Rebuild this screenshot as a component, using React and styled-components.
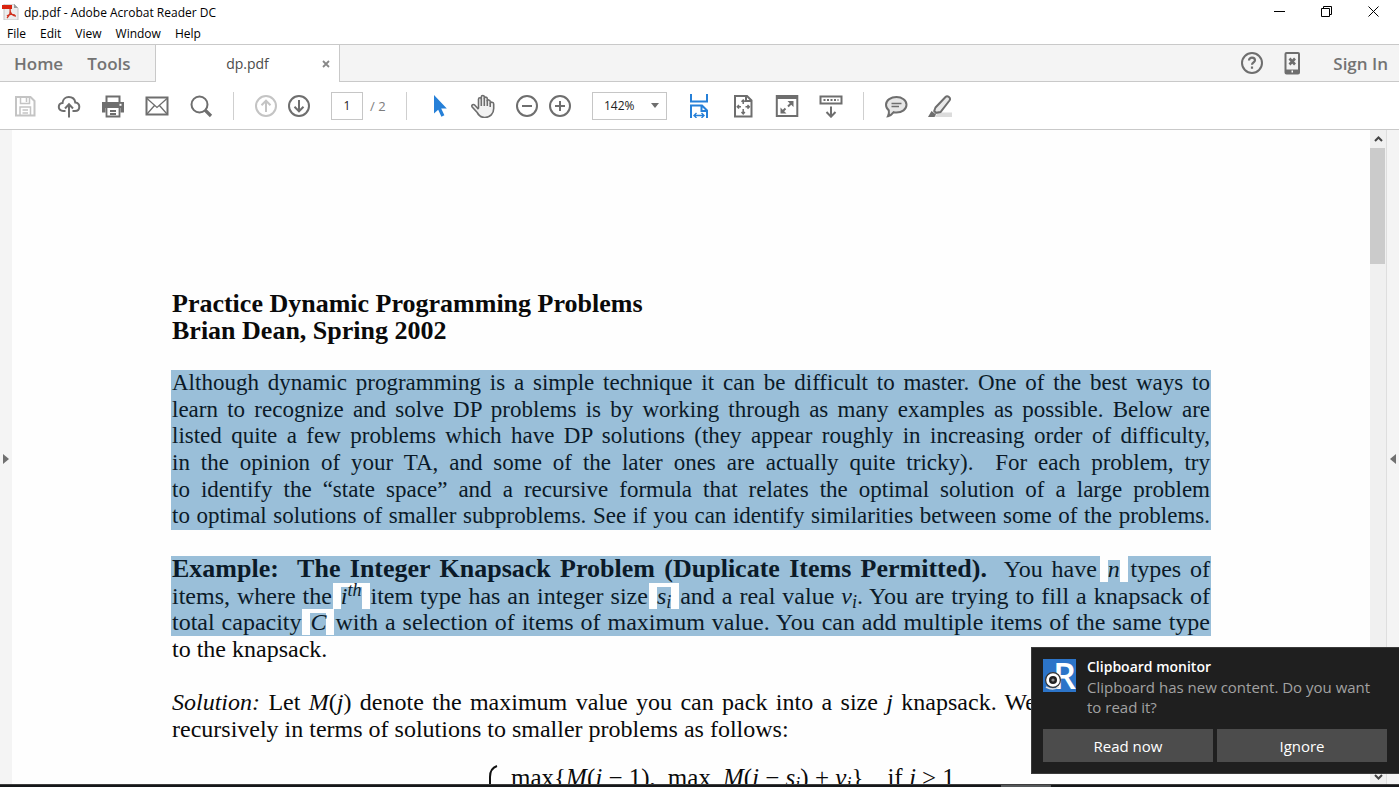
import React from 'react';
import styled, { createGlobalStyle } from 'styled-components';

const GlobalStyle = createGlobalStyle`
  * {
    box-sizing: border-box;
  }
  body {
    margin: 0;
    font-family: 'Open Sans', 'Noto Sans', sans-serif;
    color: #000;
    overflow: hidden;
  }
  button, input, select {
    font-family: inherit;
  }
`;

const Window = styled.div`
  display: flex;
  flex-direction: column;
  height: 100vh;
  background: #fff;
`;

const TitleBar = styled.header`
  display: flex;
  align-items: center;
  height: 24px;
  padding: 0 2px;
  gap: 5px;
`;

const Title = styled.h1`
  flex: 1;
  margin: 0;
  font-size: 12px;
  font-weight: 400;
`;

const WindowButton = styled.button`
  display: flex;
  align-items: center;
  justify-content: center;
  width: 47px;
  height: 22px;
  padding: 0;
  border: 0;
  background: none;
`;

const WindowButtons = styled.div`
  display: flex;
  align-self: flex-start;
`;

const MenuBar = styled.nav`
  display: flex;
  height: 20px;
  padding: 0 7px;
  gap: 14px;
`;

const MenuItem = styled.button`
  padding: 0;
  border: 0;
  background: none;
  font-size: 12px;
  line-height: 20px;
  color: #000;
`;

const TabBar = styled.div`
  display: flex;
  height: 38px;
  background: #f4f4f4;
  border-top: 1px solid #c9c9c9;
  border-bottom: 1px solid #c9c9c9;
`;

const MainTabs = styled.div`
  display: flex;
  align-items: center;
  width: 155px;
  padding-left: 14px;
  gap: 24px;
`;

const TabLink = styled.button`
  padding: 0;
  border: 0;
  background: none;
  font-size: 17px;
  font-weight: 600;
  color: #737373;
`;

const FileTab = styled.div`
  display: flex;
  align-items: center;
  width: 185px;
  height: 37px;
  padding: 0 8px 0 18px;
  background: #fff;
  border-left: 1px solid #c9c9c9;
  border-right: 1px solid #c9c9c9;
`;

const FileName = styled.span`
  flex: 1;
  text-align: center;
  font-size: 14px;
  color: #4b4b4b;
`;

const IconButton = styled.button`
  display: flex;
  align-items: center;
  justify-content: center;
  width: ${({ $small }) => ($small ? '10px' : '26px')};
  height: ${({ $small }) => ($small ? '10px' : '26px')};
  padding: 0;
  border: 0;
  background: none;
  color: ${({ $tone }) => $tone || '#6e6e6e'};
  svg {
    flex: none;
  }
`;

const Account = styled.div`
  display: flex;
  align-items: center;
  margin-left: auto;
  padding-right: 11px;
  gap: 14px;
`;

const SignIn = styled(TabLink)`
  margin-left: 14px;
`;

const ToolBar = styled.div`
  display: flex;
  align-items: center;
  height: 48px;
  padding: 0 12px;
  gap: 19px;
  border-bottom: 1px solid #c9c9c9;
`;

const ToolGroup = styled.div`
  display: flex;
  align-items: center;
  gap: ${({ $tight }) => ($tight ? '7px' : '18px')};
`;

const Divider = styled.span`
  width: 1px;
  height: 28px;
  background: #cfcfcf;
`;

const PageInput = styled.input`
  width: 32px;
  height: 28px;
  padding: 0;
  border: 1px solid #c6c6c6;
  text-align: center;
  font-size: 12px;
  color: #222;
`;

const PageTotal = styled.span`
  width: 17px;
  font-size: 13px;
  color: #7d7d7d;
  white-space: nowrap;
`;

const SelectBox = styled.div`
  display: grid;
  align-items: center;
  width: 75px;
  > * {
    grid-area: 1 / 1;
  }
  svg {
    justify-self: end;
    margin-right: 8px;
    pointer-events: none;
  }
`;

const ZoomSelect = styled.select`
  appearance: none;
  height: 28px;
  padding: 0 11px;
  border: 1px solid #c6c6c6;
  border-radius: 0;
  background: #fff;
  font-size: 12px;
  color: #222;
`;

const Workspace = styled.div`
  display: flex;
  flex: 1;
  min-height: 0;
`;

const SidePane = styled.button`
  display: flex;
  align-items: center;
  justify-content: center;
  width: 12px;
  padding: 4px 0 0;
  border: 0;
  background: #f4f4f4;
`;

const RightPane = styled(SidePane)`
  width: 13px;
  border-left: 1px solid #dedede;
`;

const Page = styled.main`
  flex: 1;
  min-width: 0;
  overflow: hidden;
  background: #fefefe;
`;

const Sheet = styled.article`
  display: flex;
  flex-direction: column;
  gap: 26px;
  max-width: 1040px;
  margin: 0 auto;
  padding-top: 160px;
  font-family: 'Liberation Serif', serif;
  font-size: 24px;
  line-height: 26px;
  color: #0a0a0a;
  b {
    font-size: 26px;
  }
`;

const DocTitle = styled.h2`
  margin: 0;
  padding-left: 1px;
  font-size: 26px;
  line-height: 27px;
`;

const Passage = styled.div`
  display: flex;
  flex-direction: column;
`;

const Lines = styled.p`
  display: grid;
  min-height: ${({ $height }) => $height}px;
  margin: 0;
  padding: 0 1px;
  background: ${({ $selected }) => ($selected ? '#9abfd9' : 'none')};
  color: ${({ $selected }) => ($selected ? '#0b1a28' : 'inherit')};
`;

const IntroLines = styled(Lines)`
  font-size: 23px;
`;

const Line = styled.span`
  display: block;
  white-space: nowrap;
  text-align: left;
  text-align-last: ${({ $loose }) => ($loose ? 'left' : 'justify')};
`;

const PartLine = styled(Line)`
  width: 864px;
`;

const Script = styled.span`
  font-size: 18px;
  font-style: italic;
  line-height: 1px;
  vertical-align: ${({ $up }) => ($up ? '8px' : '-4px')};
`;

const Unselected = styled.span`
  display: inline-block;
  height: 26px;
  padding: 0 8px;
  margin: 0 -6px;
  background: #fefefe;
  vertical-align: top;
`;

const Selected = styled.i`
  display: inline-block;
  height: 26px;
  background: #9abfd9;
  box-shadow: inset 0 4px #fefefe;
`;

const Formula = styled.div`
  display: flex;
  margin-top: -4px;
  padding-left: 316px;
  font-size: 25px;
  white-space: nowrap;
`;

const FormulaPart = styled.span`
  margin-left: ${({ $gap }) => $gap}px;
`;

const ScrollBar = styled.div`
  display: flex;
  flex-direction: column;
  width: 16px;
  background: #f0f0f0;
`;

const ScrollArrow = styled.button`
  display: flex;
  align-items: center;
  justify-content: center;
  height: ${({ $down }) => ($down ? '14px' : '18px')};
  margin-top: ${({ $down }) => ($down ? 'auto' : '0')};
  padding: 0;
  border: 0;
  background: none;
`;

const ScrollThumb = styled.div`
  height: 116px;
  margin-right: 1px;
  background: #cbcbcb;
`;

const TaskBar = styled.footer`
  display: flex;
  height: 3px;
  background: #151719;
  border-top: 1px solid #3d3d3d;
`;

const RunningApp = styled.span`
  width: 50px;
  margin-left: 1001px;
  background: #55585a;
`;

const Toast = styled.section`
  position: fixed;
  right: 0;
  bottom: 13px;
  width: 368px;
  padding: 9px 12px 11px 11px;
  background: #1f1f1f;
  border: 1px solid #3b3b3b;
  border-right: 0;
  color: #fff;
`;

const ToastBody = styled.div`
  display: flex;
  gap: 11px;
  svg {
    flex: none;
    margin-top: 2px;
  }
`;

const ToastTitle = styled.h3`
  margin: 0;
  font-size: 14px;
  font-weight: 600;
  line-height: 20px;
`;

const ToastText = styled.p`
  margin: 0;
  padding-right: 12px;
  font-size: 15px;
  line-height: 20px;
  color: #a2a2a2;
`;

const ToastActions = styled.div`
  display: grid;
  grid-template-columns: 1fr 1fr;
  gap: 4px;
  margin-top: 12px;
`;

const ToastButton = styled.button`
  height: 33px;
  padding: 0;
  border: 0;
  background: #4c4c4c;
  font-size: 15px;
  color: #fff;
`;

// 24px line icon
const Icon = ({ children, size = 24, width = 2 }) => (
  <svg width={size} height={size} viewBox="0 0 24 24" fill="none" stroke="currentColor" strokeWidth={width}>
    {children}
  </svg>
);

const PdfIcon = () => (
  <svg width="17" height="16" viewBox="0 0 17 16">
    <path d="M2 0h10l4 4v12H2z" fill="#ececec" stroke="#c4c4c4" />
    <path d="M12 0v4h4z" fill="#9a9a9a" />
    <path d="M0 1h10v4H0z" fill="#d9230f" />
    <path d="M8 5c1 4-1 7-3 9M8 7c1 3 3 5 6 5M5 12c2-2 5-2 8-1" stroke="#d0301c" strokeWidth="1.3" fill="none" />
  </svg>
);

const ReaderLogo = () => (
  <svg width="33" height="33" viewBox="0 0 33 33">
    <rect width="33" height="33" fill="#2c74c8" />
    <text x="10" y="30" fontFamily="Open Sans" fontSize="36" fontWeight="600" fill="#fff">R</text>
    <circle cx="10" cy="21" r="7.400" fill="#fff" stroke="#333" strokeWidth="1.2" />
    <circle cx="10" cy="21" r="4" fill="#222" />
    <circle cx="10" cy="21" r="1.600" fill="#8a8a8a" />
    <path d="M3 28q7 4 13 0" stroke="#ddd" strokeWidth="1.5" fill="none" />
  </svg>
);

const App = () => {
  return (
    <Window>
      <GlobalStyle />
      <TitleBar>
        <PdfIcon />
        <Title>dp.pdf - Adobe Acrobat Reader DC</Title>
        <WindowButtons>
          <WindowButton aria-label="Minimize">
            <svg width="11" height="11"><path d="M0 5.5h11" stroke="#000" /></svg>
          </WindowButton>
          <WindowButton aria-label="Restore">
            <svg width="11" height="11" fill="none" stroke="#000">
              <path d="M.5 2.5h8v8h-8zM2.500 2.500v-2h8v8h-2" />
            </svg>
          </WindowButton>
          <WindowButton aria-label="Close">
            <svg width="11" height="11"><path d="M.5.5l10 10M10.500.5l-10 10" stroke="#000" /></svg>
          </WindowButton>
        </WindowButtons>
      </TitleBar>
      <MenuBar>
        {['File', 'Edit', 'View', 'Window', 'Help'].map((name) => (
          <MenuItem key={name}>{name}</MenuItem>
        ))}
      </MenuBar>

      <TabBar>
        <MainTabs>
          <TabLink>Home</TabLink>
          <TabLink>Tools</TabLink>
        </MainTabs>
        <FileTab>
          <FileName>dp.pdf</FileName>
          <IconButton $small aria-label="Close tab">
            <svg width="8" height="8"><path d="M1 1l6 6M7 1l-6 6" stroke="#888" strokeWidth="1.8" /></svg>
          </IconButton>
        </FileTab>
        <Account>
          <IconButton aria-label="Help">
            <Icon>
              <circle cx="12" cy="12" r="10" />
              <path d="M9 9.500c0-4 6-3.500 6-.2 0 2-3 2.200-3 4.500M12 15.500v2.300" strokeWidth="2.200" />
            </Icon>
          </IconButton>
          <IconButton aria-label="Mobile">
            <Icon>
              <rect x="5.500" y="2" width="13.500" height="20.500" rx="1" />
              <path d="M5 20.500h14" strokeWidth="4" />
              <path d="M9.500 7.500l5.500 6M15 7.500l-5.500 6" strokeWidth="2.600" />
              <path d="M11.500 20.500h1.500" stroke="#fff" />
            </Icon>
          </IconButton>
          <SignIn>Sign In</SignIn>
        </Account>
      </TabBar>

      <ToolBar>
        <ToolGroup>
          <IconButton aria-label="Save" $tone="#c4c4c4">
            <Icon>
              <path d="M3 3h14.500L21.500 7v14.500H3z" />
              <path d="M7.500 3v6.500h9V3M13.500 4v4M7 21v-8h10.500v8M9.500 16h5.500M9.500 19h5.500" strokeWidth="1.500" />
            </Icon>
          </IconButton>
          <IconButton aria-label="Upload">
            <Icon>
              <path d="M8.500 17H6.200C3.500 17 1.800 15.200 1.800 13c0-2.200 1.600-3.700 3.700-3.900C5.700 5.300 8.500 3 11.800 3c3.400 0 6 2.300 6.500 5.500 2.400.3 4 2 4 4.300 0 2.500-1.800 4.200-4.300 4.200h-2.500" />
              <path d="M12 23.500V10.500M8 14.500l4-4.200 4 4.200" />
            </Icon>
          </IconButton>
          <IconButton aria-label="Print">
            <Icon>
              <path d="M5.500 8V2.500h13V8" />
              <path d="M1 8h22v10.500h-3.500V14h-15v4.500H1z" fill="currentColor" stroke="none" />
              <path d="M5.500 14v8.500h13V14M9 17h6M9 20h6" strokeWidth="1.800" />
              <path d="M18.500 10.800h2" stroke="#fff" />
            </Icon>
          </IconButton>
          <IconButton aria-label="Mail">
            <Icon>
              <rect x="1.500" y="3.500" width="21" height="17" />
              <path d="M2 4.500l10 9 10-9M2 20l7.500-8.500M22 20l-7.500-8.500" strokeWidth="1.300" />
            </Icon>
          </IconButton>
          <IconButton aria-label="Find">
            <Icon>
              <circle cx="10.500" cy="10.500" r="8" />
              <path d="M16 16l6 6" strokeWidth="3.200" />
            </Icon>
          </IconButton>
        </ToolGroup>
        <Divider />
        <ToolGroup $tight>
          <IconButton aria-label="Previous page" $tone="#c4c4c4">
            <Icon>
              <circle cx="12" cy="12" r="10" />
              <path d="M12 18V7M7.500 11.200L12 6.700l4.500 4.500" />
            </Icon>
          </IconButton>
          <IconButton aria-label="Next page">
            <Icon>
              <circle cx="12" cy="12" r="10" />
              <path d="M12 6v11M7.500 12.800l4.500 4.500 4.500-4.500" />
            </Icon>
          </IconButton>
        </ToolGroup>
        <ToolGroup $tight>
          <PageInput aria-label="Page" defaultValue="1" />
          <PageTotal>/ 2</PageTotal>
        </ToolGroup>
        <Divider />
        <ToolGroup>
          <IconButton aria-label="Select" $tone="#2680d8">
            <Icon>
              <path d="M7 1v18.500l4.200-3.800 3.200 7 3-1.500-3.200-6.700h5.600z" fill="currentColor" stroke="none" />
            </Icon>
          </IconButton>
          <IconButton aria-label="Pan">
            <Icon width={1.6}>
              <path
                d="M7.500 14.500V5.200c0-2 2.800-2 2.800 0V3c0-2 3-2 3 0v1.500c0-2 3-1.800 3 .2v2.500c0-1.800 2.900-1.700 2.900.3v2c.3-2 3.500-1.600 3.500.4v4.600c0 5-3.500 9-9 9-4 0-5.800-1.800-7.500-5L1 12.700c-.9-1.800 1.500-3 2.900-1.400l3.600 4"
                fill="#f2f2f2"
              />
              <path d="M10.300 5v7M13.300 4v8M16.300 6v6M19.200 9v4" />
            </Icon>
          </IconButton>
          <ToolGroup $tight>
            <IconButton aria-label="Zoom out">
              <Icon>
                <circle cx="12" cy="12" r="10" />
                <path d="M7 12h10" />
              </Icon>
            </IconButton>
            <IconButton aria-label="Zoom in">
              <Icon>
                <circle cx="12" cy="12" r="10" />
                <path d="M7 12h10M12 7v10" />
              </Icon>
            </IconButton>
          </ToolGroup>
        </ToolGroup>
        <SelectBox>
          <ZoomSelect aria-label="Zoom level">
            <option>142%</option>
          </ZoomSelect>
          <svg width="8" height="5"><path d="M0 0h8L4 5z" fill="#6e6e6e" /></svg>
        </SelectBox>
        <ToolGroup>
          <IconButton aria-label="Fit width" $tone="#2680d8">
            <Icon>
              <path d="M4 0v7.500h16V0M4 24V11.500h11l5 5V24M14.500 11.500V17H20" />
              <path d="M7 21.500h10M9.500 19l-2.500 2.500L9.500 24M14.500 19l2.500 2.500-2.500 2.500" strokeWidth="1.400" />
            </Icon>
          </IconButton>
          <IconButton aria-label="Fit page">
            <Icon>
              <path d="M4 2h12l4.500 4.500v16H4zM15 2v5h5" />
              <path d="M12.200 6v4M12.200 15v5M6.500 12.800h3.500M14.500 12.800h4M10.500 7.800l1.700-1.800 1.700 1.800M10.500 18l1.700 1.800 1.700-1.800M8 11l-1.700 1.800L8 14.600M16.500 11l1.800 1.800-1.800 1.800" strokeWidth="1.500" />
            </Icon>
          </IconButton>
          <IconButton aria-label="Full screen">
            <Icon>
              <rect x="1.800" y="2" width="20.500" height="20" />
              <path d="M1 3.500h22" strokeWidth="3" />
              <path d="M12.500 7h6v6zM5.500 13.500v6h6z" fill="currentColor" stroke="none" />
              <path d="M17 8.500l-4 4M7 18l3.500-3.500" />
            </Icon>
          </IconButton>
          <IconButton aria-label="Read mode">
            <Icon>
              <rect x="1.500" y="2.500" width="21" height="7" />
              <path d="M4.500 6h15" strokeDasharray="2 1.500" />
              <path d="M12 12.500v10M7.500 18l4.500 4.700 4.500-4.700" />
            </Icon>
          </IconButton>
        </ToolGroup>
        <Divider />
        <ToolGroup>
          <IconButton aria-label="Comment">
            <Icon>
              <path d="M12.500 3C18 3 22.500 6.200 22.500 10.800S18 18.500 12.500 18.500c-1 0-2 0-2.800-.3-1.500 2-3.200 3.500-5.700 4 .8-1.500 1.200-3.700.8-5.800C3 15 2 13 2 10.800 2 6.200 7 3 12.500 3z" fill="#e6e6e6" />
              <path d="M7.500 9.500h10M7.500 12.500h7.500" strokeWidth="1.300" />
            </Icon>
          </IconButton>
          <IconButton aria-label="Highlight">
            <Icon>
              <path d="M10 18.500h14V23H7z" fill="#dcdcdc" stroke="none" />
              <path d="M7.500 13.500L17.500 3c2-2 5.800 1 4 3.500L12.500 18l-4.500.8-1.800-1.800z" fill="#e9e9e9" />
              <path d="M3.500 17l4.500 3.500-1.500 2.500H0z" fill="currentColor" stroke="none" />
            </Icon>
          </IconButton>
        </ToolGroup>
      </ToolBar>

      <Workspace>
        <SidePane aria-label="Show left pane">
          <svg width="6" height="10"><path d="M0 0l6 5-6 5z" fill="#707070" /></svg>
        </SidePane>
        <Page>
          <Sheet>
            <DocTitle>
              Practice Dynamic Programming Problems
              <br />
              Brian Dean, Spring 2002
            </DocTitle>
            <IntroLines $selected $height={160}>
              <Line>Although dynamic programming is a simple technique it can be difficult to master. One of the best ways to</Line>
              <Line>learn to recognize and solve DP problems is by working through as many examples as possible. Below are</Line>
              <Line>listed quite a few problems which have DP solutions (they appear roughly in increasing order of difficulty,</Line>
              <Line>in the opinion of your TA, and some of the later ones are actually quite tricky).&nbsp; For each problem, try</Line>
              <Line>to identify the “state space” and a recursive formula that relates the optimal solution of a large problem</Line>
              <Line>to optimal solutions of smaller subproblems. See if you can identify similarities between some of the problems.</Line>
            </IntroLines>
            <Passage>
              <Lines $selected $height={80}>
                <Line>
                  <b>Example:&nbsp; The Integer Knapsack Problem (Duplicate Items Permitted).</b>&nbsp; You have{' '}
                  <Unselected><Selected>n</Selected></Unselected> types of
                </Line>
                <Line>
                  items, where the <Unselected><Selected>i<Script $up>th</Script></Selected></Unselected> item type has an integer
                  size <Unselected><Selected>s<Script>i</Script></Selected></Unselected> and a real
                  value <i>v</i><Script>i</Script>. You are trying to fill a knapsack of
                </Line>
                <Line>
                  total capacity <Unselected><Selected>C</Selected></Unselected> with a selection of items of maximum value. You can add
                  multiple items of the same type
                </Line>
              </Lines>
              <Lines $height={27}>
                <Line $loose>to the knapsack.</Line>
              </Lines>
            </Passage>
            <Lines $height={54}>
              <PartLine>
                <i>Solution:</i> Let <i>M</i>(<i>j</i>) denote the maximum value you can pack into a size <i>j</i> knapsack. We
              </PartLine>
              <Line $loose>recursively in terms of solutions to smaller problems as follows:</Line>
            </Lines>
            <Formula>
              <svg width="12" height="30" fill="none" stroke="#111" strokeWidth="2">
                <path d="M10 1C4 3 3 7 3 12v18" />
              </svg>
              <FormulaPart $gap={12}>max{'{'}<i>M</i>(<i>j</i> − 1),</FormulaPart>
              <FormulaPart $gap={12}>max</FormulaPart>
              <FormulaPart $gap={12}><i>M</i>(<i>j</i> − <i>s</i><Script>i</Script>) + <i>v</i><Script>i</Script>{'}'}</FormulaPart>
              <FormulaPart $gap={24}>if <i>j</i> ≥ 1</FormulaPart>
            </Formula>
          </Sheet>
        </Page>
        <ScrollBar>
          <ScrollArrow aria-label="Scroll up">
            <svg width="9" height="6" fill="none" stroke="#444" strokeWidth="2"><path d="M1 5l3.500-3.500L8 5" /></svg>
          </ScrollArrow>
          <ScrollThumb />
          <ScrollArrow $down aria-label="Scroll down">
            <svg width="9" height="6" fill="none" stroke="#444" strokeWidth="2"><path d="M1 1l3.500 3.500L8 1" /></svg>
          </ScrollArrow>
        </ScrollBar>
        <RightPane aria-label="Show tools pane">
          <svg width="6" height="10"><path d="M6 0L0 5l6 5z" fill="#707070" /></svg>
        </RightPane>
      </Workspace>
      <TaskBar>
        <RunningApp />
      </TaskBar>

      <Toast>
        <ToastBody>
          <ReaderLogo />
          <div>
            <ToastTitle>Clipboard monitor</ToastTitle>
            <ToastText>Clipboard has new content. Do you want to read it?</ToastText>
          </div>
        </ToastBody>
        <ToastActions>
          <ToastButton>Read now</ToastButton>
          <ToastButton>Ignore</ToastButton>
        </ToastActions>
      </Toast>
    </Window>
  );
};

export default App;
